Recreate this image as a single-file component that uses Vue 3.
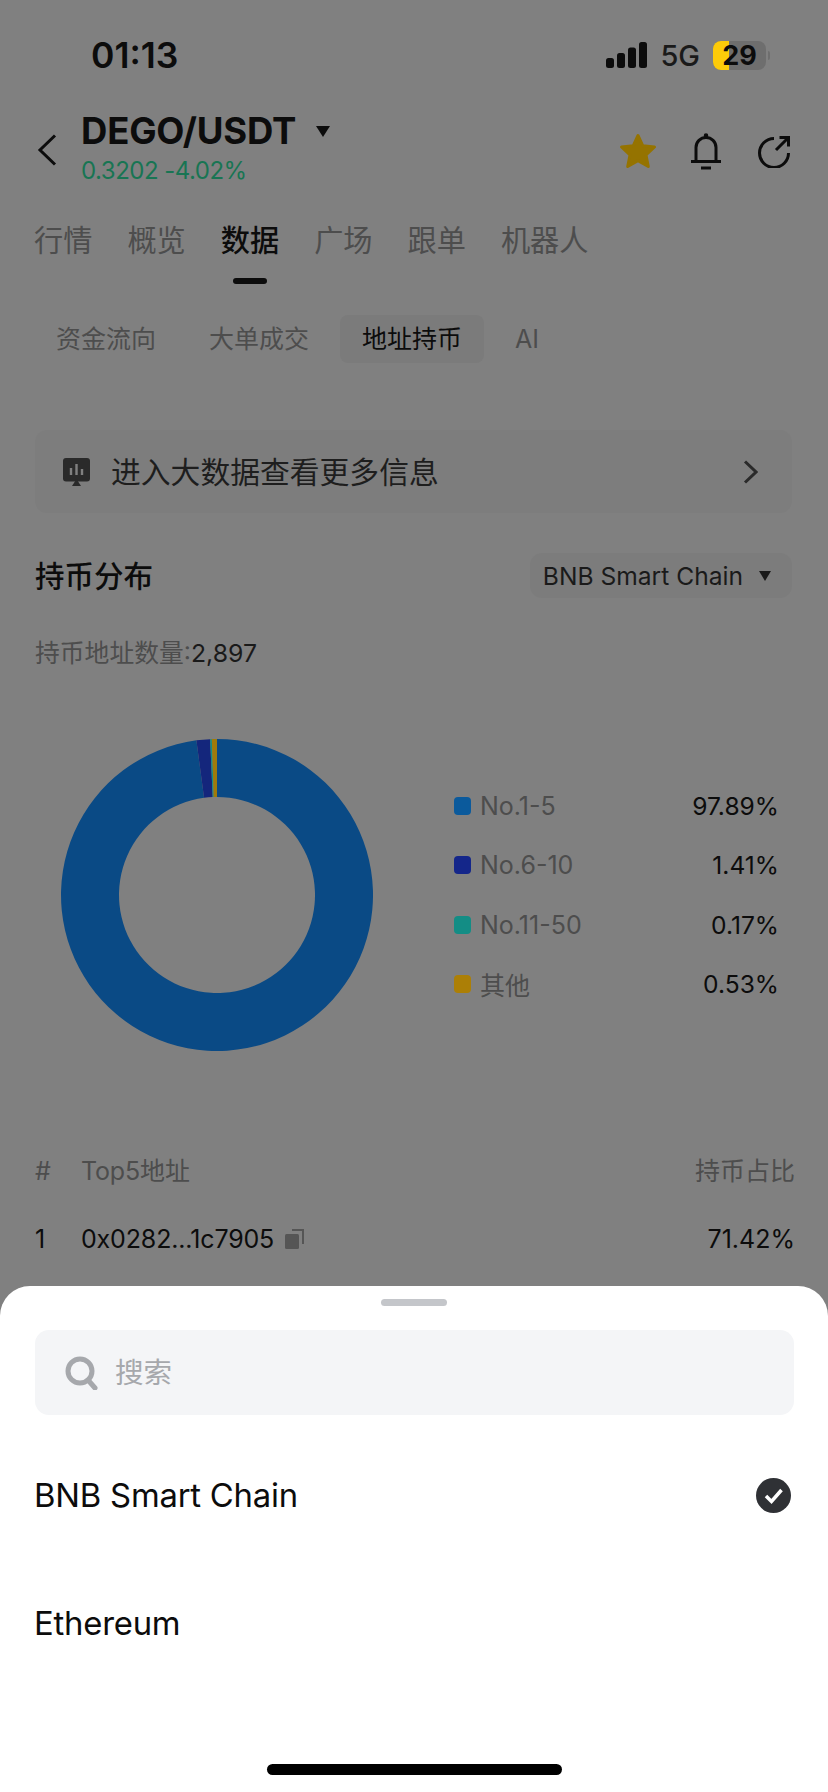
<template>
  <div class="page">
    <!-- Status bar -->
    <div class="status">
      <span class="status__time">01:13</span>
      <div class="status__right">
        <svg class="status__signal" width="41" height="26" viewBox="0 0 41 26" fill="#0c0c0c">
          <rect x="0" y="16" width="8" height="10" rx="2.5" />
          <rect x="11" y="11" width="8" height="15" rx="2.5" />
          <rect x="22" y="5.5" width="8" height="20.5" rx="2.5" />
          <rect x="33" y="0" width="8" height="26" rx="2.5" />
        </svg>
        <span class="status__net">5G</span>
        <div class="battery">
          <span class="battery__fill"></span>
          <span class="battery__num">29</span>
        </div>
        <span class="battery__tip"></span>
      </div>
    </div>

    <!-- Header -->
    <div class="head">
      <svg class="head__back" width="20" height="32" viewBox="0 0 20 32" fill="none" stroke="#0c0c0c" stroke-width="3">
        <path d="M18 1.5 3 16l15 14.500" />
      </svg>
      <div class="head__title">
        <div class="head__pair">
          <span>DEGO/USDT</span>
          <i class="caret caret--big"></i>
        </div>
        <div class="head__price">0.3202 -4.02%</div>
      </div>
      <div class="head__icons">
        <svg width="38" height="36" viewBox="0 0 38 36" fill="#957300" stroke="#957300" stroke-width="3" stroke-linejoin="round">
          <path d="M19 2.500 23.800 12.800 35.500 14 27 22 29.300 33.500 19 27.800 8.700 33.500 11 22 2.500 14 14.200 12.800Z" />
        </svg>
        <svg width="32" height="38" viewBox="0 0 32 38" fill="none" stroke="#0c0c0c" stroke-width="3">
          <path d="M6 29V15.500a10 10 0 0 1 20 0V29" />
          <path d="M1 29.500h30M11 36h10" />
          <circle cx="16" cy="3.500" r="1.500" fill="#0c0c0c" stroke-width="1.500" />
        </svg>
        <svg width="34" height="34" viewBox="0 0 34 34" fill="none" stroke="#0c0c0c" stroke-width="3">
          <path d="M17 4.500A14.500 14.500 0 1 0 31.500 19" />
          <path d="M19 16 31 4M22.500 3.500h9v9" />
        </svg>
      </div>
    </div>

    <!-- Main tabs -->
    <div class="tabs">
      <div v-for="t in tabs" :key="t" class="tabs__item" :class="{ 'tabs__item--active': t === '数据' }">
        <span>{{ t }}</span>
        <i></i>
      </div>
    </div>

    <!-- Sub tabs -->
    <div class="subtabs">
      <span v-for="t in subTabs" :key="t" class="subtabs__item" :class="{ 'subtabs__item--active': t === '地址持币' }">{{ t }}</span>
    </div>

    <!-- Banner -->
    <div class="banner">
      <svg width="27" height="28" viewBox="0 0 27 28">
        <rect x="0" y="0" width="27" height="23.500" rx="3" fill="#2a2a2a" />
        <path d="M13.500 21 18 28H9Z" fill="#2a2a2a" />
        <path d="M8 10v7M13.500 6v11M19 11v6" stroke="#808080" stroke-width="2.400" />
      </svg>
      <span class="banner__text">进入大数据查看更多信息</span>
      <svg width="15" height="24" viewBox="0 0 15 24" fill="none" stroke="#2a2a2a" stroke-width="3">
        <path d="m2 1.500 11 10.500L2 22.500" />
      </svg>
    </div>

    <!-- Distribution -->
    <div class="dist-head">
      <span class="dist-head__title">持币分布</span>
      <div class="chain-pill">
        <span>BNB Smart Chain</span>
        <i class="caret"></i>
      </div>
    </div>
    <div class="count"><span>持币地址数量:</span>2,897</div>

    <div class="chart-row">
      <svg class="donut" width="312" height="312" viewBox="0 0 312 312">
        <path v-for="s in arcs" :key="s.name" :d="s.d" :fill="s.ring" />
      </svg>
      <div class="legend">
        <div v-for="s in segments" :key="s.name" class="legend__row">
          <i :style="{ background: s.color }"></i>
          <span class="legend__name">{{ s.name }}</span>
          <span class="legend__val">{{ s.value }}%</span>
        </div>
      </div>
    </div>

    <!-- Table -->
    <div class="table-head">
      <span class="col-no">#</span>
      <span class="col-addr">Top5地址</span>
      <span>持币占比</span>
    </div>
    <div class="table-row">
      <span class="col-no">1</span>
      <span class="col-addr">
        0x0282...1c7905
        <svg width="19" height="20" viewBox="0 0 19 20" fill="none">
          <path d="M7 1h11v14" stroke="#555" stroke-width="2" />
          <rect x="0" y="5" width="14" height="15" rx="1.500" fill="#555" />
        </svg>
      </span>
      <span>71.42%</span>
    </div>

    <!-- Bottom sheet -->
    <div class="sheet">
      <div class="sheet__handle"></div>
      <div class="search">
        <svg width="33" height="34" viewBox="0 0 33 34" fill="none" stroke="#a6a8ac" stroke-width="5">
          <circle cx="15" cy="15" r="12" />
          <path d="m23 24 7 8" stroke-linecap="round" />
        </svg>
        <span>搜索</span>
      </div>
      <div v-for="c in chains" :key="c" class="option">
        <span>{{ c }}</span>
        <svg v-if="c === 'BNB Smart Chain'" width="35" height="35" viewBox="0 0 35 35">
          <circle cx="17.500" cy="17.500" r="17.500" fill="#2f3135" />
          <path d="m10 18 5.500 5.500L25.500 12" fill="none" stroke="#fff" stroke-width="3.500" />
        </svg>
      </div>
      <div class="sheet__home"></div>
    </div>
  </div>
</template>

<script setup>
import { computed } from 'vue'

const tabs = ['行情', '概览', '数据', '广场', '跟单', '机器人']
const subTabs = ['资金流向', '大单成交', '地址持币', 'AI']
const chains = ['BNB Smart Chain', 'Ethereum']

// ring = colour in the donut, color = legend swatch (slightly brighter in the shot)
const segments = [
  { name: 'No.1-5', value: 97.89, color: '#0b5a9c', ring: '#0a4a85' },
  { name: 'No.6-10', value: 1.41, color: '#14268a', ring: '#14267c' },
  { name: 'No.11-50', value: 0.17, color: '#138d85', ring: '#138d85' },
  { name: '其他', value: 0.53, color: '#ac7f06', ring: '#a07a0a' }
]

const point = (r, deg) => {
  const a = ((deg - 90) * Math.PI) / 180
  return `${(156 + r * Math.cos(a)).toFixed(2)} ${(156 + r * Math.sin(a)).toFixed(2)}`
}

const arcs = computed(() => {
  let start = 0
  return segments.map((s) => {
    const end = start + (s.value / 100) * 360
    const large = end - start > 180 ? 1 : 0
    const d = `M${point(156, start)}A156 156 0 ${large} 1 ${point(156, end)}L${point(98, end)}A98 98 0 ${large} 0 ${point(98, start)}Z`
    start = end
    return { ...s, d }
  })
})
</script>

<style>
html,
body {
  margin: 0;
  background: #808080;
}
</style>

<style scoped>
.page {
  position: relative;
  width: 828px;
  height: 1792px;
  overflow: hidden;
  background: #808080;
  color: #0c0c0c;
  font-family: Inter, 'Noto Sans CJK SC', sans-serif;
}

/* status bar */
.status {
  display: flex;
  align-items: center;
  justify-content: space-between;
  height: 110px;
  padding: 0 58px 0 91px;
  box-sizing: border-box;
}

.status__time {
  font-size: 35.500px;
  font-weight: 600;
}

.status__right {
  display: flex;
  align-items: center;
}

.status__net {
  margin-left: 13px;
  font-size: 29px;
  font-weight: 500;
  color: #1a1a1a;
}

.battery {
  position: relative;
  width: 53px;
  height: 29px;
  margin-left: 13px;
  border-radius: 8px;
  background: #6e6e6e;
}

.battery__fill {
  position: absolute;
  left: 0;
  top: 0;
  bottom: 0;
  width: 16px;
  border-radius: 8px 0 0 8px;
  background: #fdcb09;
}

.battery__num {
  position: absolute;
  inset: 0;
  text-align: center;
  font-size: 27px;
  font-weight: 700;
  line-height: 29px;
  color: #0c0c0c;
}

.battery__tip {
  width: 2px;
  height: 9px;
  margin-left: 2px;
  border-radius: 0 2px 2px 0;
  background: #6e6e6e;
}

/* header */
.head {
  display: flex;
  align-items: center;
  height: 80px;
  padding: 0 37px 0 37px;
}

.head__back {
  flex-shrink: 0;
}

.head__title {
  margin-left: 24px;
}

.head__pair {
  display: flex;
  align-items: center;
  height: 42px;
  font-size: 36.500px;
  font-weight: 700;
  letter-spacing: -0.2px;
}

.head__price {
  height: 38px;
  font-size: 24px;
  line-height: 38px;
  letter-spacing: -0.5px;
  color: #187553;
}

.head__icons {
  display: flex;
  align-items: center;
  gap: 33px;
  margin: 2px 0 0 auto;
}

.head__icons svg:last-child {
  margin-left: 2px;
}

.caret {
  display: inline-block;
  width: 0;
  height: 0;
  margin-left: 16px;
  border-style: solid;
  border-width: 10px 6.500px 0;
  border-color: #1a1a1a transparent transparent;
}

.caret--big {
  margin-left: 20px;
  border-width: 11px 7.500px 0;
  border-top-color: #0c0c0c;
}

/* main tabs */
.tabs {
  display: flex;
  gap: 35px;
  margin-top: 20px;
  padding: 0 34px;
}

.tabs__item {
  display: flex;
  flex-direction: column;
  align-items: center;
  height: 74px;
  font-size: 29.200px;
  line-height: 62px;
  color: #4d4d4d;
}

.tabs__item i {
  width: 34px;
  height: 6px;
  margin-top: 6px;
  border-radius: 3px;
}

.tabs__item--active {
  font-weight: 500;
  color: #0c0c0c;
}

.tabs__item--active i {
  background: #0c0c0c;
}

/* sub tabs */
.subtabs {
  display: flex;
  gap: 9px;
  margin-top: 31px;
  padding: 0 34px;
}

.subtabs__item {
  padding: 0 22px;
  border-radius: 8px;
  font-size: 25px;
  line-height: 48px;
  color: #4d4d4d;
}

.subtabs__item--active {
  background: #7b7b7b;
  color: #0c0c0c;
}

/* banner */
.banner {
  display: flex;
  align-items: center;
  height: 83px;
  margin: 67px 36px 0 35px;
  padding: 0 34px 0 28px;
  border-radius: 12px;
  background: #7d7d7d;
}

.banner__text {
  flex: 1;
  margin-left: 21px;
  padding-bottom: 4px;
  font-size: 29.800px;
  color: #1e1e1e;
}

/* distribution */
.dist-head {
  display: flex;
  align-items: center;
  justify-content: space-between;
  height: 45px;
  margin-top: 40px;
  padding: 0 36px 0 35px;
}

.dist-head__title {
  padding-bottom: 4px;
  font-size: 29.500px;
  font-weight: 500;
}

.chain-pill {
  display: flex;
  align-items: center;
  height: 45px;
  padding: 0 21px 0 13px;
  border-radius: 12px;
  background: #7c7c7c;
  font-size: 24.600px;
  color: #1a1a1a;
}

.count {
  margin-top: 36px;
  padding-left: 35px;
  font-size: 24.800px;
  line-height: 38px;
  color: #1a1a1a;
}

.count span {
  color: #4d4d4d;
}

/* donut + legend */
.chart-row {
  display: flex;
  align-items: center;
  margin-top: 67px;
  padding: 0 49px 0 61px;
}

.donut {
  flex-shrink: 0;
}

.legend {
  flex: 1;
  margin-left: 81px;
}

.legend__row {
  display: flex;
  align-items: center;
  height: 59.300px;
  font-size: 25px;
}

.legend__row i {
  width: 17px;
  height: 18px;
  border-radius: 4px;
}

.legend__name {
  margin-left: 9px;
  color: #4d4d4d;
}

.legend__val {
  margin-left: auto;
  font-size: 24.600px;
  color: #0c0c0c;
}

/* table */
.table-head,
.table-row {
  display: flex;
  justify-content: space-between;
  padding: 0 33px 0 35px;
  font-size: 25px;
}

.table-head {
  margin-top: 99px;
  line-height: 42px;
  color: #4d4d4d;
}

.table-row {
  margin-top: 26px;
  line-height: 42px;
}

.col-no {
  width: 46px;
}

.col-addr {
  display: flex;
  align-items: center;
  gap: 11px;
  margin-right: auto;
  letter-spacing: -0.15px;
}

/* sheet */
.sheet {
  position: absolute;
  left: 0;
  right: 0;
  bottom: 0;
  height: 506px;
  border-radius: 30px 30px 0 0;
  background: #fff;
}

.sheet__handle {
  width: 66px;
  height: 7px;
  margin: 13px auto 0;
  border-radius: 4px;
  background: #c4c6ca;
}

.search {
  display: flex;
  align-items: center;
  height: 85px;
  margin: 24px 34px 16px 35px;
  padding-left: 30px;
  border-radius: 14px;
  background: #f4f5f7;
  font-size: 28.500px;
  color: #a6a8ac;
}

.search span {
  margin-left: 17px;
  padding-bottom: 4px;
}

.option {
  display: flex;
  align-items: center;
  justify-content: space-between;
  height: 128px;
  padding: 0 37px 0 34px;
  font-size: 32.800px;
  letter-spacing: -0.2px;
  color: #0c0c0c;
}

.sheet__home {
  width: 295px;
  height: 11px;
  margin: 77px auto 0;
  border-radius: 6px;
  background: #000;
}
</style>
